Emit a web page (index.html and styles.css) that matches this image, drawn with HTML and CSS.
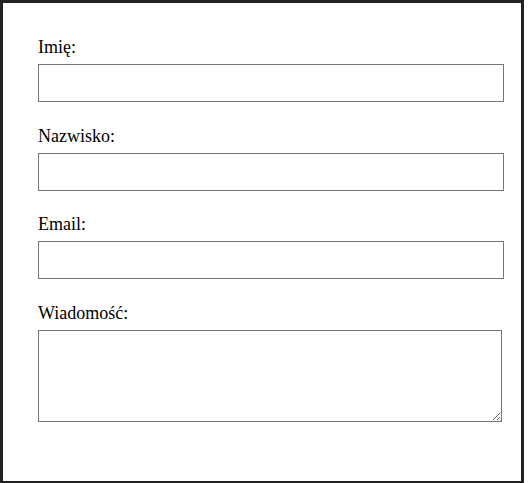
FILE: index.html
```html
<!DOCTYPE html>
<html lang="pl">
<head>
<meta charset="utf-8">
<title>Formularz</title>
<link rel="stylesheet" href="styles.css">
</head>
<body>
<form class="card">
  <div class="field">
    <label class="label" for="imie">Imię:</label>
    <input class="input" type="text" id="imie">
  </div>
  <div class="field">
    <label class="label" for="nazwisko">Nazwisko:</label>
    <input class="input" type="text" id="nazwisko">
  </div>
  <div class="field">
    <label class="label" for="email">Email:</label>
    <input class="input" type="email" id="email">
  </div>
  <div class="field">
    <label class="label" for="wiadomosc">Wiadomość:</label>
    <textarea class="textarea" id="wiadomosc"></textarea>
  </div>
</form>
</body>
</html>
```
FILE: styles.css
```css
html, body {
  margin: 0;
  padding: 0;
  background: #ffffff;
  overflow: hidden;
}
body {
  width: 532px;
  height: 483px;
  font-family: "Liberation Serif", "Times New Roman", serif;
  font-size: 18px;
  color: #000;
}
.card {
  box-sizing: border-box;
  width: 524px;
  height: 484px;
  border: 3px solid #222222;
  padding: 34px 35px;
  display: flex;
  flex-direction: column;
  gap: 23.5px;
}
.field {
  display: flex;
  flex-direction: column;
  align-items: flex-start;
  gap: 6px;
}
.label {
  display: block;
  line-height: 21px;
}
.input {
  box-sizing: border-box;
  width: 466px;
  height: 38px;
  margin: 0;
  border: 1px solid #767676;
  border-radius: 0;
  padding: 0 8px;
  font: inherit;
  background: #fff;
}
.textarea {
  box-sizing: border-box;
  width: 464px;
  height: 92px;
  margin: 0;
  border: 1px solid #767676;
  border-radius: 0;
  padding: 8px;
  font: inherit;
  background: #fff;
  resize: both;
}
```
